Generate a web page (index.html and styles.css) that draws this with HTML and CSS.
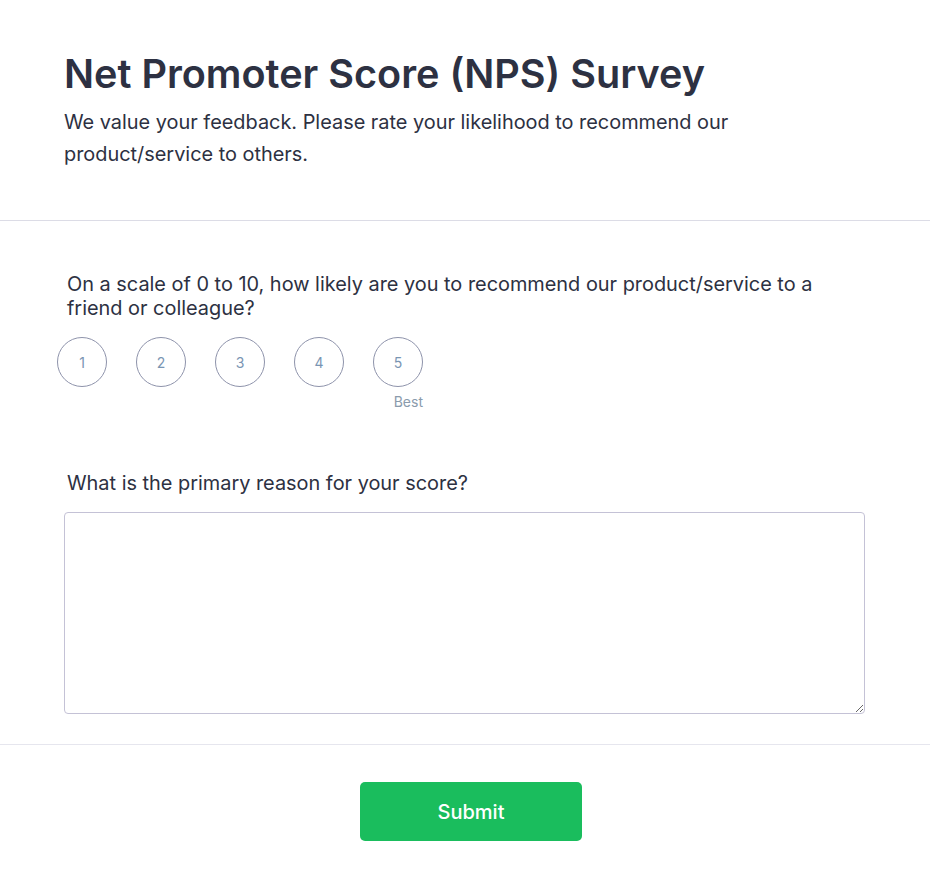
FILE: index.html
```html
<!DOCTYPE html>
<html>
<head>
    <title>NPS Survey</title>
    <link rel="stylesheet" href="styles.css">
</head>
<body>
    <div class="header">
        <h1>Net Promoter Score (NPS) Survey</h1>
        <p class="intro">We value your feedback. Please rate your likelihood to recommend our product/service to others.</p>
    </div>

    <form class="survey" id="nps-form">
        <div class="question">
            <p class="question-text">On a scale of 0 to 10, how likely are you to recommend our product/service to a friend or colleague?</p>
            <div class="scale">
                <div class="options">
                    <button type="button" class="option">1</button>
                    <button type="button" class="option">2</button>
                    <button type="button" class="option">3</button>
                    <button type="button" class="option">4</button>
                    <button type="button" class="option">5</button>
                </div>
                <div class="scale-labels">
                    <span></span>
                    <span>Best</span>
                </div>
            </div>
        </div>

        <div class="question reason">
            <label for="reason" class="question-text">What is the primary reason for your score?</label>
            <textarea id="reason"></textarea>
        </div>
    </form>

    <div class="footer">
        <button type="submit" form="nps-form" class="submit">Submit</button>
    </div>
</body>
</html>
```

FILE: styles.css
```css
body {
    margin: 0;
    font-family: Inter, "Noto Sans", sans-serif;
    background-color: #fff;
    color: #2d3142;
}

.header {
    padding: 50px 64px 50px 64px;
    border-bottom: 1px solid #dcdce6;
}

h1 {
    margin: 0;
    font-size: 39.6px;
    line-height: 48px;
    font-weight: 600;
}

.intro {
    margin: 8px 0 0;
    max-width: 680px;
    font-size: 19.9px;
    line-height: 32px;
}

.survey {
    padding: 51px 64px 30px;
    border-bottom: 1px solid #e6e6ee;
}

.question-text {
    display: block;
    max-width: 780px;
    margin: 0 0 0 3px;
    font-size: 19.9px;
    line-height: 24px;
}

.scale {
    display: inline-block;
    margin: 17px 0 0 -7px;
}

.options {
    display: flex;
    gap: 29px;
}

.option {
    width: 50px;
    height: 50px;
    border: 1px solid #8e93ab;
    border-radius: 50%;
    background: #fff;
    color: #7a95b3;
    font-family: Inter, sans-serif;
    font-size: 14px;
    cursor: pointer;
}

.scale-labels {
    display: flex;
    justify-content: space-between;
    margin-top: 5px;
    font-size: 14px;
    line-height: 20px;
    color: #8a9bac;
}

.reason {
    margin-top: 55px;
}

textarea {
    display: block;
    box-sizing: border-box;
    width: 801px;
    height: 202px;
    margin-top: 17px;
    border: 1px solid #c4c2d6;
    border-radius: 4px;
    font-family: Inter, sans-serif;
}

.footer {
    padding: 37px 64px 50px 76px;
    text-align: center;
}

.submit {
    width: 222px;
    height: 59px;
    border: none;
    border-radius: 5px;
    background-color: #1abd5d;
    color: #fff;
    font-family: Inter, sans-serif;
    font-size: 20px;
    font-weight: 500;
    cursor: pointer;
}
```
